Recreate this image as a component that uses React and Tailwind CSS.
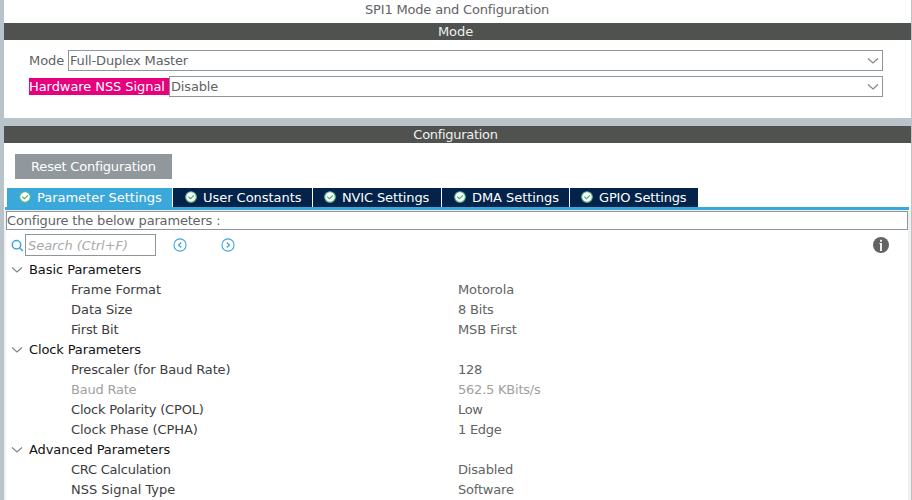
import React from "react";

function Chevron({ className = "" }) {
  return (
    <svg width="12" height="8" viewBox="0 0 12 8" className={`shrink-0 ${className}`} fill="none" stroke="#858585" strokeWidth="1.2">
      <path d="M1 1.5 L6 6 L11 1.5" />
    </svg>
  );
}

function SectionBar({ children, className }) {
  return (
    <div className={`h-[17px] shrink-0 bg-[#505250] pr-[4px] text-center leading-[17px] text-[#eef0f0] ${className}`}>
      {children}
    </div>
  );
}

function SelectBox({ value, className }) {
  return (
    <div className="flex h-[21px] flex-1 items-center justify-between border border-[#8e969d] pl-px pr-[3px]">
      <span className={`leading-[19px] ${className}`}>{value}</span>
      <Chevron />
    </div>
  );
}

function CheckIcon() {
  return (
    <svg width="12" height="12" viewBox="0 0 12 12" fill="none" className="mb-px shrink-0">
      <circle cx="6" cy="6" r="5.3" fill="#fff" stroke="#5cb87d" strokeWidth="1.1" />
      <path d="M3.2 5.6 L5.5 7.7 L8.9 4.4" stroke="#45ad6b" strokeWidth="1.2" />
    </svg>
  );
}

function ArrowIcon({ d }) {
  return (
    <svg width="14" height="14" viewBox="0 0 14 14" fill="none" stroke="#3ba8db" className="shrink-0">
      <circle cx="7" cy="7" r="6.1" strokeWidth="1.1" />
      <path d={d} strokeWidth="1.3" />
    </svg>
  );
}

const tabs = [
  { label: "Parameter Settings", style: "w-[165px] bg-[#3ba8db] pl-3 tracking-[-0.02px]" },
  { label: "User Constants", style: "w-[139px] bg-[#03234b] pl-3 tracking-[-0.03px]" },
  { label: "NVIC Settings", style: "w-[128px] bg-[#03234b] pl-[11px] tracking-[-0.14px]" },
  { label: "DMA Settings", style: "w-[127px] bg-[#03234b] pl-3 tracking-[-0.06px]" },
  { label: "GPIO Settings", style: "w-[128px] bg-[#03234b] pl-[11px] tracking-[-0.15px]" },
];

const groups = [
  {
    name: "Basic Parameters",
    track: "tracking-[-0.05px]",
    rows: [
      { name: "Frame Format", nameTrack: "tracking-[-0.03px]", value: "Motorola", valueTrack: "tracking-[-0.1px]" },
      { name: "Data Size", nameTrack: "tracking-[-0.05px]", value: "8 Bits", valueTrack: "tracking-[-0.2px]" },
      { name: "First Bit", nameTrack: "tracking-[-0.2px]", value: "MSB First", valueTrack: "tracking-[-0.12px]" },
    ],
  },
  {
    name: "Clock Parameters",
    track: "tracking-[-0.12px]",
    rows: [
      { name: "Prescaler (for Baud Rate)", nameTrack: "tracking-[-0.15px]", value: "128", valueTrack: "tracking-[-0.25px]" },
      { name: "Baud Rate", nameTrack: "tracking-[-0.22px]", value: "562.5 KBits/s", valueTrack: "tracking-[-0.22px]", disabled: true },
      { name: "Clock Polarity (CPOL)", nameTrack: "tracking-[-0.2px]", value: "Low", valueTrack: "tracking-[-0.3px]" },
      { name: "Clock Phase (CPHA)", nameTrack: "tracking-[-0.08px]", value: "1 Edge", valueTrack: "tracking-[-0.25px]" },
    ],
  },
  {
    name: "Advanced Parameters",
    track: "tracking-[-0.08px]",
    rows: [
      { name: "CRC Calculation", nameTrack: "tracking-[-0.23px]", value: "Disabled", valueTrack: "tracking-[-0.18px]" },
      { name: "NSS Signal Type", nameTrack: "tracking-[0px]", value: "Software", valueTrack: "tracking-[-0.2px]" },
    ],
  },
];

export default function App() {
  return (
    <div className="flex h-[500px] w-[912px] flex-col overflow-hidden whitespace-nowrap bg-[#b8c4ca] pl-1 pr-px font-['DejaVu_Sans',sans-serif] text-[13px] text-[#626365]">
      <section className="h-[118px] shrink-0 bg-white">
        <h1 className="h-[23px] pr-px text-center leading-[19px] tracking-[-0.17px]">SPI1 Mode and Configuration</h1>
        <SectionBar className="tracking-[-0.05px]">Mode</SectionBar>
        <div className="flex flex-col gap-[5px] pl-[25px] pr-7 pt-2.5">
          <div className="flex items-center">
            <span className="w-[39px] leading-[21px] tracking-[-0.05px]">Mode</span>
            <SelectBox value="Full-Duplex Master" className="tracking-[-0.17px]" />
          </div>
          <div className="flex items-center">
            <span className="h-[17px] w-[140px] bg-[#e6007e] leading-[17px] tracking-[-0.07px] text-white">Hardware NSS Signal</span>
            <SelectBox value="Disable" className="tracking-[-0.15px]" />
          </div>
        </div>
      </section>

      <section className="mt-2 flex flex-1 flex-col bg-white">
        <SectionBar className="tracking-[-0.3px]">Configuration</SectionBar>
        <button className="ml-[11px] mt-[11px] h-[25px] w-[157px] shrink-0 bg-[#90989e] leading-[25px] tracking-[-0.2px] text-white">
          Reset Configuration
        </button>
        <nav className="mt-[9px] flex h-[19px] gap-px pl-[3px]">
          {tabs.map((tab) => (
            <div key={tab.label} className={`flex items-center gap-[6px] text-white ${tab.style}`}>
              <CheckIcon />
              <span className="leading-[19px]">{tab.label}</span>
            </div>
          ))}
        </nav>
        <div className="ml-px mr-[2px] h-[3px] bg-[#3ba8db]" />
        <div className="flex flex-1 flex-col bg-[#f0f0f0] pl-[2px] pr-[3px]">
          <div className="mt-px h-[19px] border border-[#8e969d] bg-white leading-[17px] tracking-[-0.18px]">
            Configure the below parameters :
          </div>
          <div className="flex-1 bg-white">
            <div className="flex h-[30px] items-center pl-[5px] pr-[19px]">
              <svg width="13" height="13" viewBox="0 0 13 13" fill="none" stroke="#3ba8db" strokeWidth="1.5">
                <circle cx="5.5" cy="5.8" r="4.2" />
                <path d="M8.5 8.8 L11.8 12" />
              </svg>
              <div className="ml-px h-[22px] w-[131px] border border-[#8e969d] pl-[2px] italic leading-[21px] tracking-[-0.05px] text-[#a9a9a9]">
                Search (Ctrl+F)
              </div>
              <div className="ml-[17px] flex gap-[34px]">
                <ArrowIcon d="M8.2 4.5 L5.7 7 L8.2 9.5" />
                <ArrowIcon d="M5.8 4.5 L8.3 7 L5.8 9.5" />
              </div>
              <svg width="16" height="16" viewBox="0 0 16 16" className="ml-auto">
                <circle cx="8" cy="8" r="8" fill="#636363" />
                <rect x="7" y="2.8" width="2" height="2" fill="#eee" />
                <path d="M6.4 6 H9 V14 H7 V7 H6.4 Z" fill="#eee" />
              </svg>
            </div>
            {groups.map((group) => (
              <div key={group.name} className="leading-5">
                <div className={`flex h-5 items-center pl-[5px] text-[#111] ${group.track}`}>
                  <Chevron className="mr-[6px]" />
                  {group.name}
                </div>
                {group.rows.map((row) => (
                  <div key={row.name} className={`flex h-5 pl-[65px] ${row.disabled ? "text-[#a0a0a0]" : ""}`}>
                    <span className={`w-[387px] ${row.nameTrack} ${row.disabled ? "" : "text-[#3d3d40]"}`}>{row.name}</span>
                    <span className={row.valueTrack}>{row.value}</span>
                  </div>
                ))}
              </div>
            ))}
          </div>
        </div>
      </section>
    </div>
  );
}
